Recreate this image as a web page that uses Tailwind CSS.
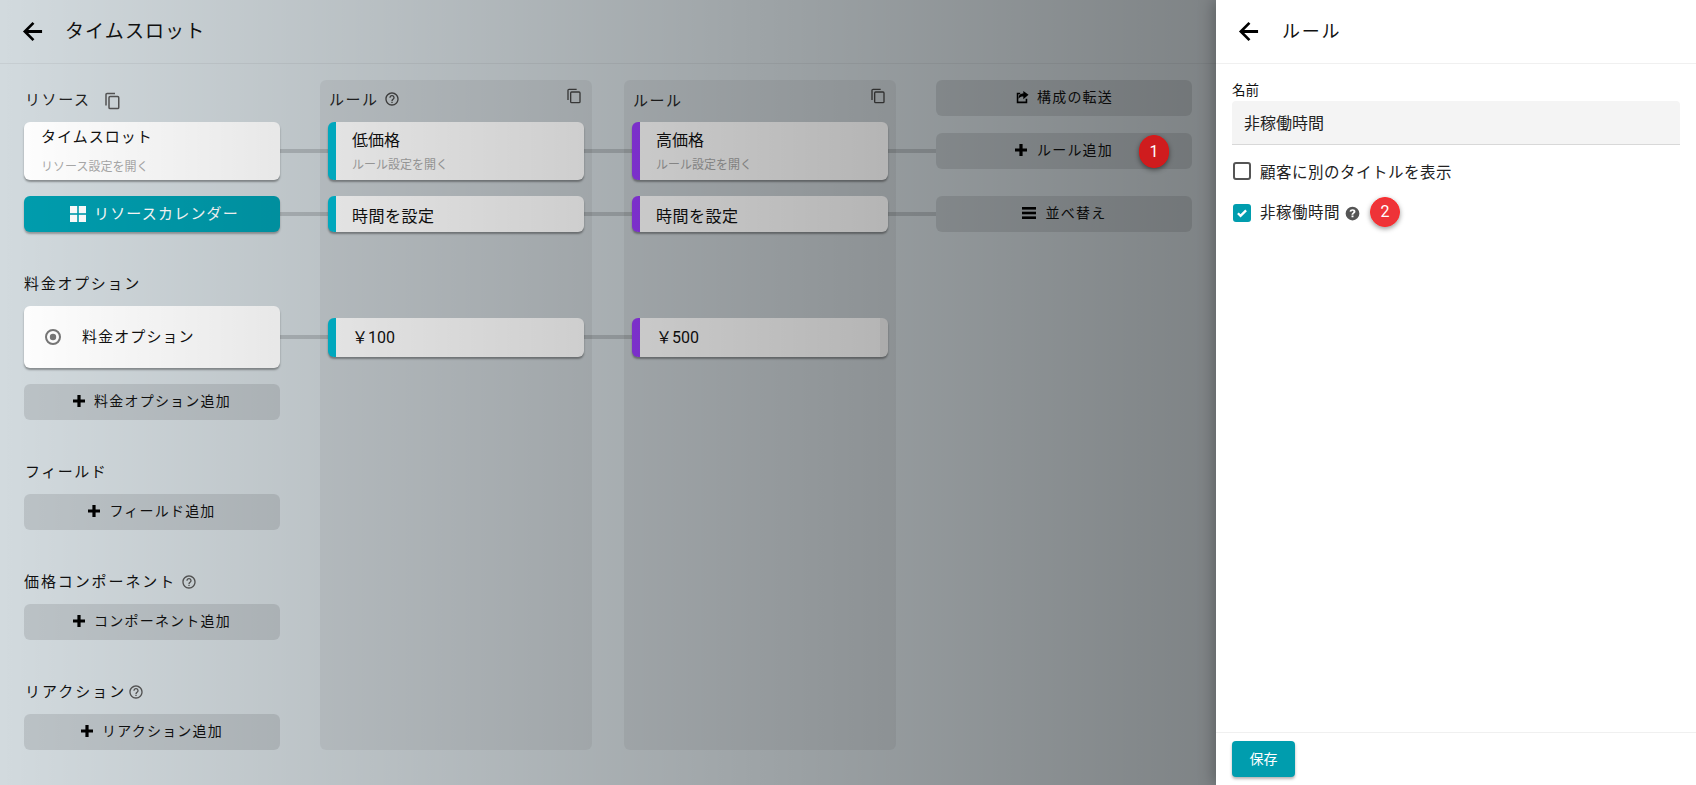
<!DOCTYPE html>
<html lang="ja">
<head>
<meta charset="utf-8">
<script src="https://cdn.jsdelivr.net/npm/@tailwindcss/browser@4"></script>
<title>タイムスロット</title>
</head>
<body class="font-['Roboto','Noto_Sans_CJK_JP',sans-serif]">
<div class="relative w-full h-screen overflow-hidden bg-[#d2dade] text-[#111]">
  <header class="h-16 border-b border-black/5 flex items-center pl-[19px]">
    <svg class="w-[27px] h-[27px]" viewBox="0 0 24 24" fill="#000"><path d="M20.5 10.700H8.200l5.500-5.500L12 3.500 3.500 12l8.500 8.500 1.700-1.700-5.500-5.500h12.300z"/></svg>
    <h1 class="ml-[19px] text-[19px] tracking-[1.100px] leading-none font-normal">タイムスロット</h1>
  </header>
  <main class="flex pt-4 pl-6">
    <section class="w-64 shrink-0">
      <div class="h-[42px] flex items-center pl-[1px]">
        <span class="text-[15px] tracking-[1.6px] text-[#222] -mt-[1px]">リソース</span>
        <svg class="w-[18px] h-[18px] ml-3" viewBox="0 0 24 24" fill="none" stroke="#555" stroke-width="2"><path d="M4 18V3.500C4 2.700 4.700 2 5.500 2H16"/><rect x="8" y="6" width="13" height="16" rx="1.500"/></svg>
      </div>
      <div class="relative h-[58px] rounded-md bg-white shadow-[0_2px_2px_rgba(0,0,0,.35)] pl-[17px] pt-[5px]">
        <div class="text-[15px] leading-5 tracking-[1px]">タイムスロット</div>
        <div class="text-[12px] leading-4 mt-3 text-[#aaa]">リソース設定を開く</div>
        <span class="absolute left-full top-[27px] w-12 h-1 bg-black/15"></span>
      </div>
      <button class="relative mt-4 h-9 w-full rounded-md bg-[#009dae] shadow-[0_2px_2px_rgba(0,0,0,.3)] flex items-center justify-center text-white text-[15px] tracking-[1.200px] pl-[5px]">
        <svg class="w-4 h-4 mr-2" viewBox="0 0 16 16" fill="#fff"><rect x="0" y="0" width="7.200" height="7.200"/><rect x="8.800" y="0" width="7.200" height="7.200"/><rect x="0" y="8.800" width="7.200" height="7.200"/><rect x="8.800" y="8.800" width="7.200" height="7.200"/></svg>
        リソースカレンダー
        <span class="absolute left-full top-4 w-12 h-1 bg-black/15"></span>
      </button>
      <h2 class="mt-10 h-6 leading-6 text-[15px] tracking-[1.700px] font-normal">料金オプション</h2>
      <div class="relative mt-[10px] h-[62px] rounded-md bg-white shadow-[0_2px_2px_rgba(0,0,0,.35)] flex items-center pl-[21px]">
        <svg class="w-4 h-4" viewBox="0 0 16 16"><circle cx="8" cy="8" r="7" fill="none" stroke="#777" stroke-width="2"/><circle cx="8" cy="8" r="3.200" fill="#777"/></svg>
        <span class="ml-[21px] text-[15px] tracking-[1.100px]">料金オプション</span>
        <span class="absolute left-full top-[29px] w-12 h-1 bg-black/15"></span>
      </div>
      <button class="mt-4 h-9 w-full rounded-md bg-black/10 flex items-center justify-center text-[14px] tracking-[1.200px] pb-[2px]">
        <svg class="w-3 h-3 mr-[9px]" viewBox="0 0 12 12" fill="#000"><path d="M4.400 0h3.200v4.400H12v3.200H7.600V12H4.400V7.600H0V4.400h4.400z"/></svg>料金オプション追加
      </button>
      <h2 class="mt-10 h-6 leading-6 text-[15px] tracking-[1.500px] font-normal pl-[1px]">フィールド</h2>
      <button class="mt-[10px] h-9 w-full rounded-md bg-black/10 flex items-center justify-center text-[14px] tracking-[1.200px] pb-[2px]">
        <svg class="w-3 h-3 mr-[9px]" viewBox="0 0 12 12" fill="#000"><path d="M4.400 0h3.200v4.400H12v3.200H7.600V12H4.400V7.600H0V4.400h4.400z"/></svg>フィールド追加
      </button>
      <h2 class="mt-10 h-6 flex items-center text-[15px] tracking-[1.900px] font-normal">価格コンポーネント
        <svg class="w-4 h-4 ml-[5px]" viewBox="0 0 24 24" fill="#555"><path d="M11 18h2v-2h-2v2zm1-16C6.480 2 2 6.480 2 12s4.480 10 10 10 10-4.480 10-10S17.520 2 12 2zm0 18c-4.410 0-8-3.590-8-8s3.590-8 8-8 8 3.590 8 8-3.590 8-8 8zm0-14c-2.210 0-4 1.790-4 4h2c0-1.100.9-2 2-2s2 .9 2 2c0 2-3 1.750-3 5h2c0-2.250 3-2.500 3-5 0-2.210-1.790-4-4-4z"/></svg>
      </h2>
      <button class="mt-[10px] h-9 w-full rounded-md bg-black/10 flex items-center justify-center text-[14px] tracking-[1.200px] pb-[2px]">
        <svg class="w-3 h-3 mr-[9px]" viewBox="0 0 12 12" fill="#000"><path d="M4.400 0h3.200v4.400H12v3.200H7.600V12H4.400V7.600H0V4.400h4.400z"/></svg>コンポーネント追加
      </button>
      <h2 class="mt-10 h-6 flex items-center text-[15px] tracking-[2px] font-normal pl-[1px]">リアクション
        <svg class="w-4 h-4 ml-[2px]" viewBox="0 0 24 24" fill="#555"><path d="M11 18h2v-2h-2v2zm1-16C6.480 2 2 6.480 2 12s4.480 10 10 10 10-4.480 10-10S17.520 2 12 2zm0 18c-4.410 0-8-3.590-8-8s3.590-8 8-8 8 3.590 8 8-3.590 8-8 8zm0-14c-2.210 0-4 1.790-4 4h2c0-1.100.9-2 2-2s2 .9 2 2c0 2-3 1.750-3 5h2c0-2.250 3-2.500 3-5 0-2.210-1.790-4-4-4z"/></svg>
      </h2>
      <button class="mt-[10px] h-9 w-full rounded-md bg-black/10 flex items-center justify-center text-[14px] tracking-[1.200px] pb-[2px]">
        <svg class="w-3 h-3 mr-[9px]" viewBox="0 0 12 12" fill="#000"><path d="M4.400 0h3.200v4.400H12v3.200H7.600V12H4.400V7.600H0V4.400h4.400z"/></svg>リアクション追加
      </button>
    </section>

    <section class="ml-10 w-[272px] h-[670px] shrink-0 rounded-md bg-black/[0.05] px-2">
      <div class="relative h-[42px] flex items-center pl-[1px]">
        <span class="text-[15px] tracking-[1.500px] text-[#222] -mt-[1px]">ルール</span>
        <svg class="w-4 h-4 ml-[5px] -mt-1" viewBox="0 0 24 24" fill="#444"><path d="M11 18h2v-2h-2v2zm1-16C6.480 2 2 6.480 2 12s4.480 10 10 10 10-4.480 10-10S17.520 2 12 2zm0 18c-4.410 0-8-3.590-8-8s3.590-8 8-8 8 3.590 8 8-3.590 8-8 8zm0-14c-2.210 0-4 1.790-4 4h2c0-1.100.9-2 2-2s2 .9 2 2c0 2-3 1.750-3 5h2c0-2.250 3-2.500 3-5 0-2.210-1.790-4-4-4z"/></svg>
        <svg class="absolute right-[2px] top-2 w-4 h-4" viewBox="0 0 24 24" fill="none" stroke="#444" stroke-width="2"><path d="M3 18V3.500C3 2.700 3.700 2 4.500 2H16"/><rect x="7" y="6" width="14" height="16" rx="1.500"/></svg>
      </div>
      <div class="relative h-[58px] rounded-md bg-white border-l-8 border-[#00bcd4] shadow-[0_2px_2px_rgba(0,0,0,.35)] pl-4 pt-[7px]">
        <div class="text-[16px] leading-6">低価格</div>
        <div class="text-[12px] leading-4 mt-1 text-[#aaa]">ルール設定を開く</div>
        <span class="absolute left-full top-[27px] w-12 h-1 bg-black/15"></span>
      </div>
      <div class="relative mt-4 h-9 rounded-md bg-white border-l-8 border-[#00bcd4] shadow-[0_2px_2px_rgba(0,0,0,.35)] pl-4 pt-[9px] text-[16px] leading-6 tracking-[0.5px]">時間を設定
        <span class="absolute left-full top-4 w-12 h-1 bg-black/15"></span>
      </div>
      <div class="relative mt-[86px] h-[39px] rounded-md bg-white border-l-8 border-[#00bcd4] shadow-[0_2px_2px_rgba(0,0,0,.35)] pl-4 flex items-center text-[16px]">￥100
        <span class="absolute left-full top-[17px] w-12 h-1 bg-black/15"></span>
      </div>
    </section>

    <section class="ml-8 w-[272px] h-[670px] shrink-0 rounded-md bg-black/[0.05] px-2">
      <div class="relative h-[42px] flex items-center pt-[1px] pl-[1px]">
        <span class="text-[15px] tracking-[1.500px] text-[#222]">ルール</span>
        <svg class="absolute right-[2px] top-2 w-4 h-4" viewBox="0 0 24 24" fill="none" stroke="#444" stroke-width="2"><path d="M3 18V3.500C3 2.700 3.700 2 4.500 2H16"/><rect x="7" y="6" width="14" height="16" rx="1.500"/></svg>
      </div>
      <div class="relative h-[58px] rounded-md bg-white border-l-8 border-[#9c3cff] shadow-[0_2px_2px_rgba(0,0,0,.35)] pl-4 pt-[7px]">
        <div class="text-[16px] leading-6">高価格</div>
        <div class="text-[12px] leading-4 mt-1 text-[#aaa]">ルール設定を開く</div>
        <span class="absolute left-full top-[27px] w-12 h-1 bg-black/15"></span>
      </div>
      <div class="relative mt-4 h-9 rounded-md bg-white border-l-8 border-[#9c3cff] shadow-[0_2px_2px_rgba(0,0,0,.35)] pl-4 pt-[9px] text-[16px] leading-6 tracking-[0.5px]">時間を設定
        <span class="absolute left-full top-4 w-12 h-1 bg-black/15"></span>
      </div>
      <div class="relative mt-[86px] h-[39px] rounded-md bg-white border-l-8 border-[#9c3cff] shadow-[0_2px_2px_rgba(0,0,0,.35)] pl-4 flex items-center text-[16px] overflow-hidden">￥500
        <span class="absolute right-0 inset-y-0 w-2 bg-black/5"></span>
      </div>
    </section>

    <section class="ml-10 w-64 shrink-0 text-[14px] tracking-[1.200px]">
      <button class="h-9 w-full rounded-md bg-black/10 flex items-center justify-center pb-[2px]">
        <svg class="w-[14px] h-[14px] mr-2" viewBox="0 0 16 16" fill="#000"><path d="M9.500 1v3C5.500 4 4 6.500 4 10 5.300 8.100 7 7.500 9.500 7.500v3L15.500 5.500z"/><path d="M2 3h4v1.800H3.800v8.400h8.400V10H14v5H2z"/></svg>構成の転送
      </button>
      <button class="relative mt-[17px] h-9 w-full rounded-md bg-black/10 flex items-center justify-center pb-[2px]">
        <svg class="w-3 h-3 mr-[10px]" viewBox="0 0 12 12" fill="#000"><path d="M4.400 0h3.200v4.400H12v3.200H7.600V12H4.400V7.600H0V4.400h4.400z"/></svg>ルール追加
        <span class="absolute z-10 left-[203px] top-[2px] w-[30px] h-[33px] rounded-full bg-[#cf1c1e] border border-[#e01515] shadow-[0_2px_5px_rgba(0,0,0,.45)] text-white text-[16px] tracking-normal leading-[31px] text-center">1</span>
      </button>
      <button class="mt-[27px] h-9 w-full rounded-md bg-black/10 flex items-center justify-center pb-[2px]">
        <svg class="w-[14px] h-[14px] mr-[10px]" viewBox="0 0 14 14" fill="#000"><rect y="1" width="14" height="2.600"/><rect y="5.700" width="14" height="2.600"/><rect y="10.400" width="14" height="2.600"/></svg>並べ替え
      </button>
    </section>
  </main>

  <div class="absolute left-0 inset-y-0 w-[1216px] bg-linear-to-r from-transparent to-black/40"></div>

  <aside class="absolute right-0 inset-y-0 w-[480px] bg-white flex flex-col shadow-[-3px_0_14px_rgba(0,0,0,.25)]">
    <header class="h-16 shrink-0 border-b border-[#f0f0f0] flex items-center pl-[19px]">
      <svg class="w-[27px] h-[27px]" viewBox="0 0 24 24" fill="#000"><path d="M20.500 10.700H8.200l5.500-5.500L12 3.500 3.500 12l8.500 8.500 1.700-1.700-5.500-5.500h12.300z"/></svg>
      <h2 class="ml-5 text-[18px] tracking-[1.700px] leading-none font-normal">ルール</h2>
    </header>
    <div class="flex-1 px-4 pt-4">
      <label class="block text-[13.500px] leading-5 text-[#111]">名前</label>
      <div class="mt-[1px] h-[44px] rounded-t bg-[#f4f4f4] border-b border-[#d8d8d8] pl-3 flex items-center pt-[3px] text-[16px] text-[#222]">非稼働時間</div>
      <div class="mt-[17px] h-[18px] flex items-center">
        <span class="ml-[1px] w-[18px] h-[18px] rounded-[3px] border-2 border-[#555] bg-white"></span>
        <span class="ml-[9px] mt-[5px] text-[15.500px] tracking-[0.5px] text-[#222]">顧客に別のタイトルを表示</span>
      </div>
      <div class="mt-6 h-[18px] flex items-center">
        <span class="ml-[1px] w-[18px] h-[18px] rounded-[3px] bg-[#009dae] flex items-center justify-center">
          <svg class="w-[14px] h-[14px]" viewBox="0 0 24 24" fill="none" stroke="#fff" stroke-width="4"><path d="M5 12.500l4.500 4.500L19 7.500"/></svg>
        </span>
        <span class="ml-[9px] mt-[1px] text-[15.500px] tracking-[0.5px] text-[#222]">非稼働時間</span>
        <svg class="w-[15px] h-[15px] ml-[5px]" viewBox="0 0 24 24" fill="#555"><path fill-rule="evenodd" d="M12 1a11 11 0 1 0 0 22 11 11 0 0 0 0-22zm-1.600 17h3.200v-3h-3.200zm1.700-13c-2.700 0-4.400 1.300-4.800 3.700l2.800.6c.2-1.200.9-1.800 1.900-1.800s1.600.5 1.600 1.300c0 .7-.5 1.200-1.300 1.800-1.200.9-1.900 1.700-1.900 3.400h3c0-.9.3-1.300 1.100-1.900 1.200-.9 2.200-1.800 2.200-3.500C16.700 6.400 14.800 5 12.100 5z"/></svg>
        <span class="ml-[10px] -mt-[2px] w-[30px] h-[30px] rounded-full bg-[#ee3338] border border-[#ff2a2a] shadow-[0_2px_5px_rgba(0,0,0,.4)] text-white text-[16px] leading-[28px] text-center">2</span>
      </div>
    </div>
    <footer class="h-[53px] shrink-0 border-t border-[#f0f0f0] pl-4 pt-2">
      <button class="w-[63px] h-9 rounded bg-[#009dae] text-white text-[14px] shadow-[0_2px_3px_rgba(0,0,0,.3)]">保存</button>
    </footer>
  </aside>
</div>
</body>
</html>
